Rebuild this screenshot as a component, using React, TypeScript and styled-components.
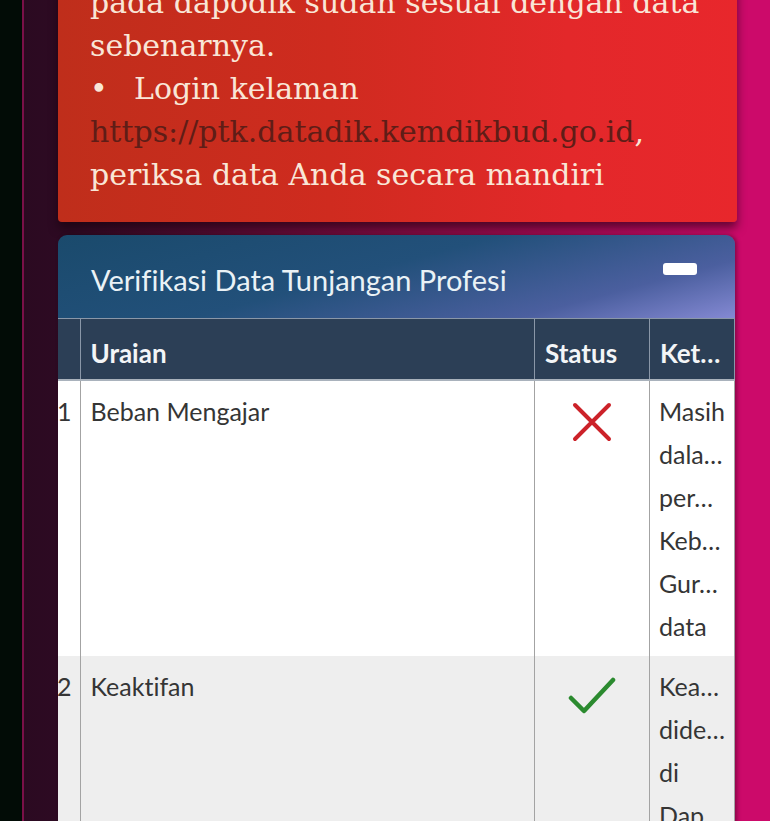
import React from "react";
import styled, { createGlobalStyle } from "styled-components";

const GlobalStyle = createGlobalStyle`
  html, body {
    margin: 0;
    padding: 0;
    height: 100%;
    overflow: hidden;
    background: #020c06;
  }
  #root {
    height: 100%;
  }
`;

const Shell = styled.div`
  display: flex;
  height: 100vh;
  overflow: hidden;
  background: #020c06;
`;

const SideEdge = styled.div`
  flex: none;
  width: 22px;
  background: #020c06;
  border-right: 2px solid #7a1048;
`;

const Page = styled.main`
  flex: 1;
  min-width: 0;
  padding: 0 33px 0 34px;
  background: linear-gradient(90deg, #2b0a21 0%, #2e0a23 6%, #8a0c46 55%, #cc0a6a 95%);
`;

const AlertCard = styled.section`
  margin-top: -19px;
  padding: 0 8px 26px 32px;
  background: linear-gradient(90deg, #bf2e1b 0%, #cf2b1f 40%, #e3282a 75%, #e8272c 100%);
  border-radius: 0 0 4px 4px;
  box-shadow: 0 6px 10px rgba(20, 0, 10, 0.55);
  color: #f9e6d7;
  font-family: "DejaVu Serif", serif;
  font-size: 30px;
  line-height: 43px;
  white-space: nowrap;
`;

const NoteList = styled.ul`
  margin: 0;
  padding: 0;
  list-style: none;
`;

const NoteItem = styled.li<{ $bullet?: boolean }>`
  &::before {
    content: ${(p) => (p.$bullet ? '"•"' : "none")};
    display: inline-block;
    width: 44px;
  }
`;

const NoteLink = styled.a`
  color: #5f1d17;
  text-decoration: none;
`;

const Panel = styled.section`
  margin: 13px 2px 0 0;
  border-radius: 9px 9px 0 0;
  overflow: hidden;
  box-shadow: 2px 0 4px rgba(0, 0, 0, 0.35);
  font-family: Lato, "Open Sans", sans-serif;
  font-variant-ligatures: none;
`;

const PanelHeader = styled.header`
  display: flex;
  align-items: flex-start;
  justify-content: space-between;
  padding: 27px 38px 21px 33px;
  background: linear-gradient(165deg, #1a4a6c 0%, #22507a 45%, #4b5f9f 78%, #8489d3 100%);
`;

const PanelTitle = styled.h2`
  margin: 0;
  font-size: 29px;
  font-weight: 400;
  line-height: 35px;
  color: #eaf2f6;
`;

const CollapseButton = styled.button`
  width: 34px;
  height: 12px;
  margin-top: 1px;
  padding: 0;
  border: none;
  border-radius: 3px;
  background: #ffffff;
`;

const Table = styled.table`
  width: 100%;
  border-collapse: collapse;
  table-layout: fixed;
`;

const HeadRow = styled.tr`
  background: #2c3f56;
`;

const HeadCell = styled.th`
  padding: 18px 9px 10px 10px;
  font-size: 26px;
  font-weight: 700;
  line-height: 32px;
  color: #f3f5f7;
  text-align: left;
  white-space: nowrap;
  overflow: hidden;
  border-top: 1px solid #8a97a8;
  border-left: 1px solid #8a97a8;
  border-right: 1px solid #8a97a8;
  border-bottom: 2px solid #a9b2bc;

  &:first-child {
    border-left: none;
  }
`;

const BodyRow = styled.tr<{ $shade?: boolean }>`
  background: ${(p) => (p.$shade ? "#eeeeee" : "#ffffff")};
`;

const Cell = styled.td`
  padding: 9px 9px 8px 10px;
  vertical-align: top;
  font-size: 25px;
  line-height: 43px;
  color: #353535;
  border-left: 1px solid #a3a3a3;
  border-right: 1px solid #a3a3a3;

  &:first-child {
    border-left: none;
  }
`;

const NumberCell = styled(Cell)`
  padding: 9px 8px 8px 0;
  direction: rtl;
  white-space: nowrap;
  overflow: hidden;
`;

const StatusCell = styled(Cell)`
  padding-left: 0;
  padding-right: 0;
`;

const StatusIcon = styled.svg`
  display: block;
  margin: 12px auto 0;
`;

const KetCell = styled(Cell)`
  padding-left: 9px;
  padding-right: 4px;
`;

const KetLine = styled.span`
  display: block;
  white-space: nowrap;
  overflow: hidden;
`;

const CrossIcon = () => (
  <StatusIcon width="40" height="40" viewBox="0 0 40 40">
    <path d="M3 3 L37 37 M37 3 L3 37" stroke="#cc2229" strokeWidth="4" strokeLinecap="round" fill="none" />
  </StatusIcon>
);

const CheckIcon = () => (
  <StatusIcon width="48" height="40" viewBox="0 0 48 40">
    <polyline
      points="3,21 16,34 45,3"
      stroke="#2b8a2f"
      strokeWidth="4.5"
      strokeLinecap="round"
      strokeLinejoin="round"
      fill="none"
    />
  </StatusIcon>
);

interface VerifRow {
  no: number;
  uraian: string;
  ok: boolean;
  ket: string[];
}

const rows: VerifRow[] = [
  { no: 1, uraian: "Beban Mengajar", ok: false, ket: ["Masih", "dala…", "per…", "Keb…", "Gur…", "data"] },
  { no: 2, uraian: "Keaktifan", ok: true, ket: ["Kea…", "dide…", "di", "Dap…", "dan"] },
];

const App = () => {
  return (
    <>
      <GlobalStyle />
      <Shell>
        <SideEdge />
        <Page>
          <AlertCard>
            <NoteList>
              <NoteItem>
                pada dapodik sudah sesuai dengan data
                <br />
                sebenarnya.
              </NoteItem>
              <NoteItem $bullet>
                Login kelaman
                <br />
                <NoteLink href="#">https://ptk.datadik.kemdikbud.go.id</NoteLink>,
                <br />
                periksa data Anda secara mandiri
              </NoteItem>
            </NoteList>
          </AlertCard>

          <Panel>
            <PanelHeader>
              <PanelTitle>Verifikasi Data Tunjangan Profesi</PanelTitle>
              <CollapseButton aria-label="Collapse" />
            </PanelHeader>
            <Table>
              <colgroup>
                <col style={{ width: 22 }} />
                <col />
                <col style={{ width: 115 }} />
                <col style={{ width: 85 }} />
              </colgroup>
              <thead>
                <HeadRow>
                  <HeadCell />
                  <HeadCell>Uraian</HeadCell>
                  <HeadCell>Status</HeadCell>
                  <HeadCell>Ket…</HeadCell>
                </HeadRow>
              </thead>
              <tbody>
                {rows.map((row, i) => (
                  <BodyRow key={row.no} $shade={i % 2 === 1}>
                    <NumberCell>{row.no}</NumberCell>
                    <Cell>{row.uraian}</Cell>
                    <StatusCell>{row.ok ? <CheckIcon /> : <CrossIcon />}</StatusCell>
                    <KetCell>
                      {row.ket.map((line, j) => (
                        <KetLine key={j}>{line}</KetLine>
                      ))}
                    </KetCell>
                  </BodyRow>
                ))}
              </tbody>
            </Table>
          </Panel>
        </Page>
      </Shell>
    </>
  );
};

export default App;
